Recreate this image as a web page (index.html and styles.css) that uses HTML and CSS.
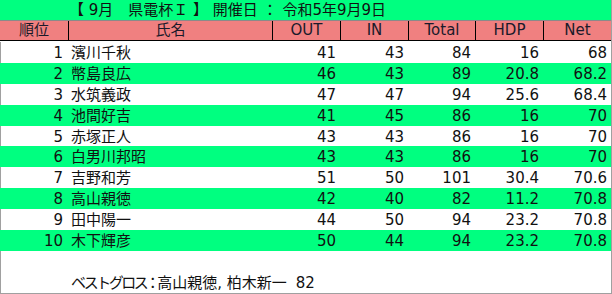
FILE: index.html
```html
<!DOCTYPE html>
<html lang="ja">
<head>
<meta charset="utf-8">
<title>9月 県電杯Ⅰ</title>
<link rel="stylesheet" href="styles.css">
</head>
<body>
<div class="sheet">
  <div class="title-row">
    <div class="title-pad"></div>
    <div class="title">【 9月　県電杯Ｉ 】 開催日 ： 令和5年9月9日</div>
  </div>
  <div class="grid head">
    <div class="hc">順位</div>
    <div class="hc">氏名</div>
    <div class="hc">OUT</div>
    <div class="hc">IN</div>
    <div class="hc">Total</div>
    <div class="hc">HDP</div>
    <div class="hc">Net</div>
  </div>
  <div class="body">
    <div class="grid row">
      <div class="num">1</div><div class="name">濱川千秋</div><div class="num">41</div><div class="num">43</div><div class="num">84</div><div class="num">16</div><div class="num">68</div>
    </div>
    <div class="grid row alt">
      <div class="num">2</div><div class="name">幣島良広</div><div class="num">46</div><div class="num">43</div><div class="num">89</div><div class="num">20.8</div><div class="num">68.2</div>
    </div>
    <div class="grid row">
      <div class="num">3</div><div class="name">水筑義政</div><div class="num">47</div><div class="num">47</div><div class="num">94</div><div class="num">25.6</div><div class="num">68.4</div>
    </div>
    <div class="grid row alt">
      <div class="num">4</div><div class="name">池間好吉</div><div class="num">41</div><div class="num">45</div><div class="num">86</div><div class="num">16</div><div class="num">70</div>
    </div>
    <div class="grid row">
      <div class="num">5</div><div class="name">赤塚正人</div><div class="num">43</div><div class="num">43</div><div class="num">86</div><div class="num">16</div><div class="num">70</div>
    </div>
    <div class="grid row alt">
      <div class="num">6</div><div class="name">白男川邦昭</div><div class="num">43</div><div class="num">43</div><div class="num">86</div><div class="num">16</div><div class="num">70</div>
    </div>
    <div class="grid row">
      <div class="num">7</div><div class="name">吉野和芳</div><div class="num">51</div><div class="num">50</div><div class="num">101</div><div class="num">30.4</div><div class="num">70.6</div>
    </div>
    <div class="grid row alt">
      <div class="num">8</div><div class="name">高山親徳</div><div class="num">42</div><div class="num">40</div><div class="num">82</div><div class="num">11.2</div><div class="num">70.8</div>
    </div>
    <div class="grid row">
      <div class="num">9</div><div class="name">田中陽一</div><div class="num">44</div><div class="num">50</div><div class="num">94</div><div class="num">23.2</div><div class="num">70.8</div>
    </div>
    <div class="grid row alt">
      <div class="num">10</div><div class="name">木下輝彦</div><div class="num">50</div><div class="num">44</div><div class="num">94</div><div class="num">23.2</div><div class="num">70.8</div>
    </div>
    <div class="footer"><span class="kana">ベストグロス</span><span class="colon">：</span>高山親徳, 柏木新一 <span class="best">82</span></div>
  </div>
</div>
</body>
</html>
```

FILE: styles.css
```css
html, body {
  margin: 0;
  padding: 0;
  background: #ffffff;
}

body {
  font-family: "DejaVu Sans", "Noto Sans CJK JP", sans-serif;
  font-size: 15px;
  color: #111111;
}

.sheet {
  width: 612px;
  height: 294px;
  box-sizing: border-box;
  border-right: 1px solid #a0a0a0;
  border-bottom: 1px solid #a0a0a0;
  display: flex;
  flex-direction: column;
  overflow: hidden;
}

.title-row {
  height: 20px;
  background: #00ff80;
  display: flex;
  align-items: center;
  white-space: nowrap;
}

.title-pad {
  width: 68px;
  flex: none;
}

.title {
  line-height: 20px;
  padding-left: 1px;
}

.grid {
  display: grid;
  grid-template-columns: 68px 204px 68px 68px 67px 68px 68px;
}

.head {
  height: 21px;
  box-sizing: border-box;
  background: #f08080;
  border-top: 1px solid #8a8a8a;
  border-bottom: 1px solid #000000;
}

.hc {
  text-align: center;
  line-height: 19px;
  color: #1a1a2a;
  box-sizing: border-box;
}

.hc + .hc {
  border-left: 1px solid #000000;
}

.body {
  flex: 1;
  border-left: 1px solid #a0a0a0;
  margin-top: 1px;
  display: flex;
  flex-direction: column;
}

.row {
  height: 20.9px;
  margin-left: -1px;
  align-items: center;
}

.row.alt {
  background: #00ff80;
}

.num {
  text-align: right;
  padding-right: 4px;
  line-height: 20px;
  padding-top: 1px;
}

.row .num:first-child {
  padding-right: 5px;
}

.name {
  padding-left: 3px;
  line-height: 20px;
  padding-top: 1px;
  white-space: nowrap;
}

.footer {
  padding-top: 22px;
  padding-left: 70px;
  line-height: 20px;
  white-space: nowrap;
}

.kana {
  letter-spacing: -2.5px;
}

.colon {
  margin-left: -1px;
  letter-spacing: -3px;
}

.best {
  margin-left: 4px;
}
```
